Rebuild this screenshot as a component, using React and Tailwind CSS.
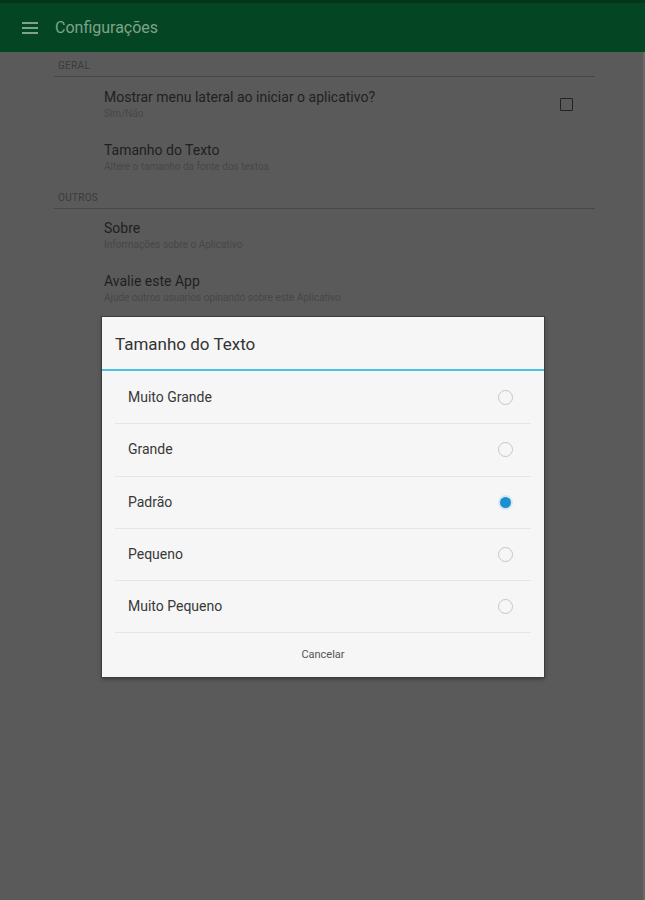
export default function App() {
  const options = ['Muito Grande', 'Grande', 'Padrão', 'Pequeno', 'Muito Pequeno'];
  const selected = 'Padrão';
  const font = { fontFamily: 'Roboto, "Noto Sans", sans-serif' };

  return (
    <div className="relative w-[645px] h-[900px] bg-[#5a5a5a] overflow-hidden" style={font}>
      {/* toolbar */}
      <div className="h-[52px] bg-[#044623] border-t-[3px] border-[#03361b] flex items-center">
        <div className="w-[55px] flex justify-center pl-[5px]">
          <svg width="16" height="12" viewBox="0 0 16 12">
            <rect x="0" y="0" width="16" height="2" fill="#7fa28a" />
            <rect x="0" y="5" width="16" height="2" fill="#7fa28a" />
            <rect x="0" y="10" width="16" height="2" fill="#7fa28a" />
          </svg>
        </div>
        <span className="text-[16px] text-[#7fa28a]">Configurações</span>
      </div>
      <div className="absolute top-[52px] right-0 w-[2px] h-[848px] bg-[#6a6a6a]" />

      {/* settings list */}
      <div className="pl-[54px] pr-[50px]">
        <Section title="GERAL" />
        <div className="flex items-center h-[54px] pl-[50px] pr-[22px]">
          <div className="flex-1">
            <div className="text-[14px] text-[#1f1f1f] leading-[19px]">Mostrar menu lateral ao iniciar o aplicativo?</div>
            <div className="text-[10px] text-[#474747] leading-[14px]">Sim/Não</div>
          </div>
          <div className="w-[13px] h-[13px] border-[1.5px] border-[#222] rounded-[1px]" />
        </div>
        <Item title="Tamanho do Texto" sub="Altere o tamanho da fonte dos textos" />
        <Section title="OUTROS" />
        <Item title="Sobre" sub="Informações sobre o Aplicativo" />
        <Item title="Avalie este App" sub="Ajude outros usuarios opinando sobre este Aplicativo" />
      </div>

      {/* dialog */}
      <div className="absolute left-[102px] top-[317px] w-[442px] bg-[#f6f6f6] shadow-[0_0_0_1px_#3d3d3d,0_2px_4px_rgba(0,0,0,0.4)]">
        <div className="h-[52px] flex items-center pl-[13px] pt-[3px] text-[17px] text-[#333]">Tamanho do Texto</div>
        <div className="h-[2px] bg-[#4ec0e2]" />
        <div className="px-[13px] pt-[1px]">
          {options.map((o) => (
            <div key={o} className="h-[52.3px] flex items-center border-b border-[#e6e6e6] pl-[13px] pr-[18px]">
              <span className="flex-1 text-[14px] text-[#383838]">{o}</span>
              {o === selected ? (
                <span className="w-[15px] h-[15px] rounded-full bg-[#d7e9f3] flex items-center justify-center">
                  <span className="w-[11px] h-[11px] rounded-full bg-[#1b8fd0]" />
                </span>
              ) : (
                <span className="w-[15px] h-[15px] rounded-full border-[1.5px] border-[#c6c6c6]" />
              )}
            </div>
          ))}
        </div>
        <div className="h-[44px] flex items-center justify-center text-[11px] text-[#555]">Cancelar</div>
      </div>
    </div>
  );
}

function Section({ title }) {
  return (
    <div className="h-[25px] flex items-end pb-[5px] pl-[4px] border-b border-[#474747] text-[10px] leading-none text-[#3a3a3a] tracking-[0.3px]">
      {title}
    </div>
  );
}

function Item({ title, sub }) {
  return (
    <div className="flex flex-col justify-center h-[53px] pl-[50px]">
      <div className="text-[14px] text-[#1f1f1f] leading-[19px]">{title}</div>
      <div className="text-[10px] text-[#474747] leading-[14px]">{sub}</div>
    </div>
  );
}
